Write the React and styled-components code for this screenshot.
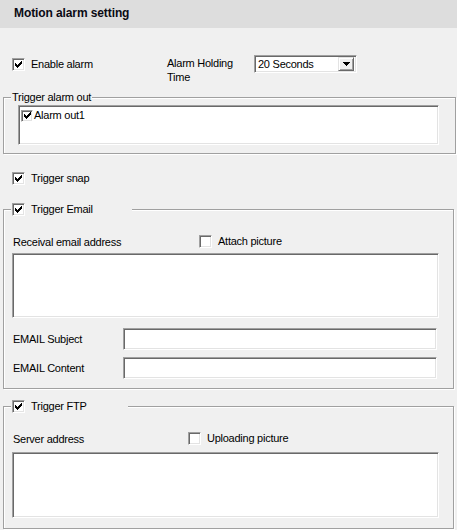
import styled, { createGlobalStyle } from "styled-components";

const Global = createGlobalStyle`
  html, body {
    margin: 0;
    padding: 0;
    background: #f0f0f0;
  }
  body {
    font-family: "Liberation Sans", Arial, sans-serif;
    font-size: 11px;
    letter-spacing: -0.25px;
    color: #000;
  }
`;

const Page = styled.div`
  width: 457px;
  height: 530px;
  background: #f0f0f0;
  overflow: hidden;
`;

const Header = styled.div`
  height: 28px;
  background: #dddddd;
  display: flex;
  align-items: center;
  padding-left: 14px;
  font-size: 12px;
  font-weight: bold;
  letter-spacing: -0.1px;
  color: #0a0a14;
  box-sizing: border-box;
  padding-bottom: 3px;
`;

const Content = styled.div`
  padding: 0 0 0 3px;
`;

const TopRow = styled.div`
  display: flex;
  align-items: flex-start;
  margin-top: 27px;
  height: 30px;
  padding-left: 9px;
`;

const CheckLabel = styled.label`
  display: flex;
  align-items: center;
  gap: ${(p) => p.$gap ?? 6}px;
  width: ${(p) => (p.$width ? `${p.$width}px` : "auto")};
  height: 13px;
  line-height: 13px;
  margin-top: ${(p) => p.$top ?? 0}px;
  white-space: nowrap;
`;

const Box = styled.span`
  box-sizing: border-box;
  width: ${(p) => p.$size}px;
  height: ${(p) => p.$size}px;
  flex: none;
  background: #fff;
  border: 1px solid;
  border-color: #a0a0a0 #fff #fff #a0a0a0;
  box-shadow: inset 1px 1px 0 #696969, inset -1px -1px 0 #e3e3e3;
  display: flex;
  align-items: center;
  justify-content: center;

  svg {
    display: block;
  }
`;

const HoldLabel = styled.div`
  width: 87px;
  line-height: 14px;
  margin-top: 1px;
`;

const Select = styled.div`
  box-sizing: border-box;
  width: 103px;
  height: 18px;
  background: #fff;
  border: 1px solid;
  border-color: #a0a0a0 #fff #fff #a0a0a0;
  box-shadow: inset 1px 1px 0 #696969, inset -1px -1px 0 #e3e3e3;
  display: flex;
  align-items: center;
  padding: 2px 2px 2px 3px;
`;

const SelectText = styled.span`
  flex: 1;
  line-height: 13px;
`;

const DropButton = styled.span`
  box-sizing: border-box;
  width: 16px;
  height: 14px;
  background: #f0f0f0;
  border: 1px solid;
  border-color: #e3e3e3 #696969 #696969 #e3e3e3;
  box-shadow: inset 1px 1px 0 #fff, inset -1px -1px 0 #a0a0a0;
  display: flex;
  align-items: center;
  justify-content: center;
`;

const Group = styled.div`
  border: 1px solid #a0a0a0;
  box-shadow: inset 1px 1px 0 #fff, 1px 1px 0 #fff;
  margin-top: ${(p) => p.$top}px;
  margin-right: ${(p) => p.$right}px;
  padding-bottom: ${(p) => p.$bottom}px;
`;

const Legend = styled.div`
  width: ${(p) => (p.$width ? `${p.$width}px` : "fit-content")};
  box-sizing: border-box;
  margin: -7px 0 0 ${(p) => p.$left}px;
  padding: 0 1px;
  height: 13px;
  line-height: 13px;
  background: #f0f0f0;
  display: flex;
  align-items: center;
`;

const ListBox = styled.div`
  box-sizing: border-box;
  margin: 1px 16px 0 14px;
  height: 40px;
  background: #fff;
  border: 1px solid;
  border-color: #a0a0a0 #fff #fff #a0a0a0;
  box-shadow: inset 1px 1px 0 #696969, inset -1px -1px 0 #e3e3e3;
  padding: 3px 2px;
`;

const SnapRow = styled.div`
  margin-top: 18px;
  padding-left: 9px;
`;

const LabelRow = styled.div`
  display: flex;
  align-items: center;
  height: 13px;
  margin-top: 19px;
  padding-left: 9px;
`;

const FieldLabel = styled.span`
  width: ${(p) => p.$width}px;
  flex: none;
  line-height: 13px;
  padding-top: ${(p) => p.$drop ?? 0}px;
`;

const TextArea = styled.div`
  box-sizing: border-box;
  margin: ${(p) => p.$top}px 0 0 8px;
  width: 427px;
  height: ${(p) => p.$height}px;
  background: #fff;
  border: 1px solid;
  border-color: #a0a0a0 #fff #fff #a0a0a0;
  box-shadow: inset 1px 1px 0 #696969, inset -1px -1px 0 #e3e3e3;
`;

const InputRow = styled.div`
  display: flex;
  align-items: center;
  margin-top: ${(p) => p.$top}px;
  padding-left: 9px;
`;

const Input = styled.div`
  box-sizing: border-box;
  width: 314px;
  height: 22px;
  background: #fff;
  border: 1px solid;
  border-color: #a0a0a0 #fff #fff #a0a0a0;
  box-shadow: inset 1px 1px 0 #696969, inset -1px -1px 0 #e3e3e3;
`;

const Tick = () => (
  <svg width="7" height="7" viewBox="0 0 7 7" shapeRendering="crispEdges">
    <path
      fill="#000"
      d="M6 0h1v3h-1zM5 1h1v3h-1zM4 2h1v3h-1zM0 2h1v3h-1zM1 3h1v3h-1zM2 4h1v3h-1zM3 3h1v3h-1z"
    />
  </svg>
);

const Check = ({ checked, size = 13, children, ...rest }) => (
  <CheckLabel {...rest}>
    <Box $size={size}>{checked && <Tick />}</Box>
    {children}
  </CheckLabel>
);

const Arrow = () => (
  <svg width="7" height="4" viewBox="0 0 7 4" shapeRendering="crispEdges">
    <path fill="#000" d="M0 0h7v1h-7zM1 1h5v1h-5zM2 2h3v1h-3zM3 3h1v1h-1z" />
  </svg>
);

export default function App() {
  return (
    <Page>
      <Global />
      <Header>Motion alarm setting</Header>
      <Content>
        <TopRow>
          <Check checked $width={155} $top={3}>
            Enable alarm
          </Check>
          <HoldLabel>Alarm Holding Time</HoldLabel>
          <Select>
            <SelectText>20 Seconds</SelectText>
            <DropButton>
              <Arrow />
            </DropButton>
          </Select>
        </TopRow>

        <Group $top={12} $right={1} $bottom={8}>
          <Legend $left={7}>Trigger alarm out</Legend>
          <ListBox>
            <Check checked size={12} $gap={1}>
              Alarm out1
            </Check>
          </ListBox>
        </Group>

        <SnapRow>
          <Check checked>Trigger snap</Check>
        </SnapRow>

        <Group $top={24} $right={3} $bottom={9}>
          <Legend $left={7} $width={121}>
            <Check checked>Trigger Email</Check>
          </Legend>
          <LabelRow>
            <FieldLabel $width={186} $drop={2}>
              Receival email address
            </FieldLabel>
            <Check>Attach picture</Check>
          </LabelRow>
          <TextArea $top={5} $height={65} />
          <InputRow $top={10}>
            <FieldLabel $width={110}>EMAIL Subject</FieldLabel>
            <Input />
          </InputRow>
          <InputRow $top={7}>
            <FieldLabel $width={110}>EMAIL Content</FieldLabel>
            <Input />
          </InputRow>
        </Group>

        <Group $top={17} $right={3} $bottom={10}>
          <Legend $left={7} $width={117}>
            <Check checked>Trigger FTP</Check>
          </Legend>
          <LabelRow>
            <FieldLabel $width={175} $drop={2}>
              Server address
            </FieldLabel>
            <Check>Uploading picture</Check>
          </LabelRow>
          <TextArea $top={7} $height={66} />
        </Group>
      </Content>
    </Page>
  );
}
